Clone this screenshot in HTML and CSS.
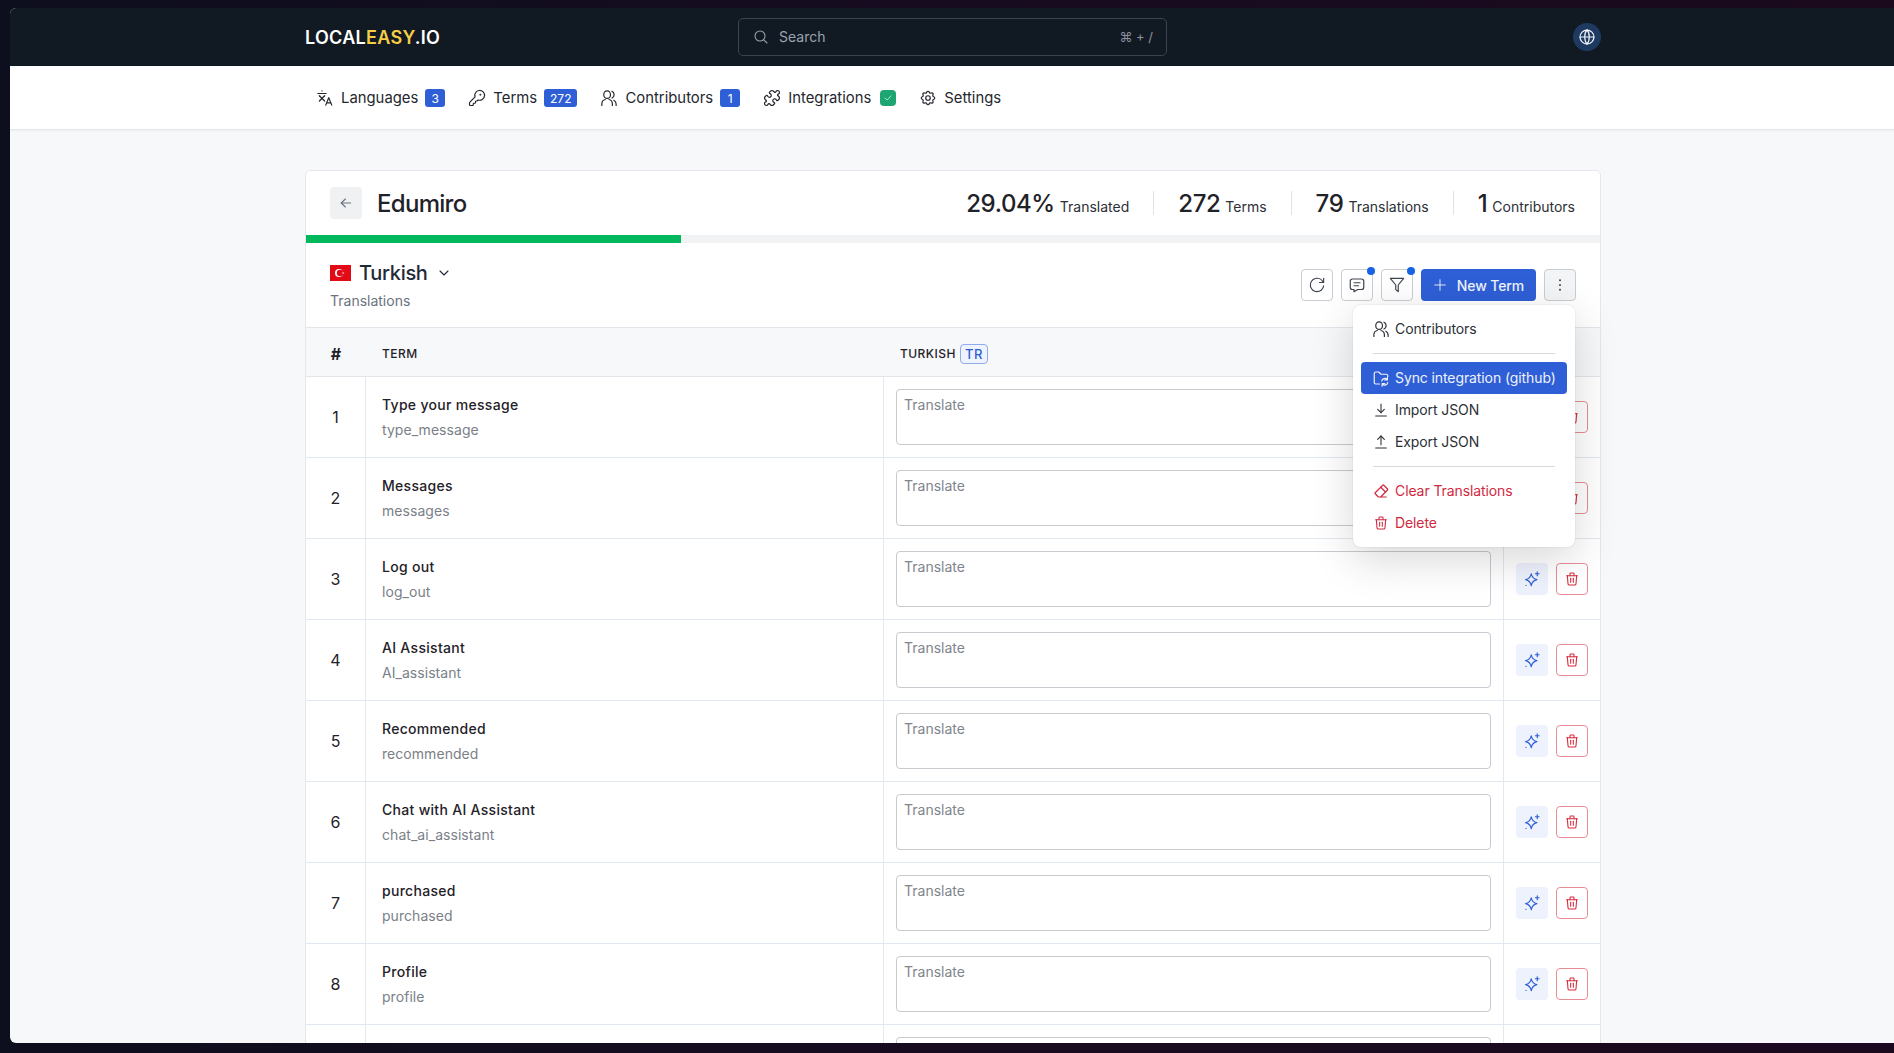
FILE: index.html
```html
<!DOCTYPE html>
<html lang="en">
<head>
<meta charset="utf-8">
<title>Localeasy.io</title>
<link rel="stylesheet" href="styles.css">
</head>
<body>
<svg class="sprite" xmlns="http://www.w3.org/2000/svg">
  <symbol id="i-search" viewBox="0 0 24 24"><circle cx="10.5" cy="10.5" r="7.5"/><path d="M21 21l-5.2-5.2"/></symbol>
  <symbol id="i-globe" viewBox="0 0 24 24"><circle cx="12" cy="12" r="9.300"/><path d="M2.700 12h18.600"/><path d="M12 2.700c-2.500 2.400-3 6-3 9.300s.5 6.900 3 9.300"/><path d="M12 2.700c2.500 2.400 3 6 3 9.300s-.5 6.900-3 9.300"/></symbol>
  <symbol id="i-lang" viewBox="0 0 24 24"><path d="M8 2.500h.01"/><path d="M2.500 6h11"/><path d="M4.500 9l7 7"/><path d="M11.500 9l-7 7"/><path d="M13 21.500l4-10 4 10"/><path d="M14.500 18.500h5"/></symbol>
  <symbol id="i-key" viewBox="0 0 24 24"><path d="M2.586 17.414A2 2 0 0 0 2 18.828V21a1 1 0 0 0 1 1h3a1 1 0 0 0 1-1v-1a1 1 0 0 1 1-1h1a1 1 0 0 0 1-1v-1a1 1 0 0 1 1-1h.172a2 2 0 0 0 1.414-.586l.814-.814a6.500 6.500 0 1 0-4-4z"/><circle cx="16.500" cy="7.500" r=".5"/></symbol>
  <symbol id="i-users" viewBox="0 0 24 24"><ellipse cx="9.500" cy="7.500" rx="4.500" ry="5"/><path d="M2.500 22v-2a6 6 0 0 1 4.500-6"/><path d="M16.500 22v-2a6 6 0 0 0-4.500-6"/><path d="M16 3a5 5 0 0 1 0 9"/><path d="M21.500 22v-2a6 6 0 0 0-3-5"/></symbol>
  <symbol id="i-puzzle" viewBox="0 0 24 24"><path d="M19.439 7.850c-.049.322.059.648.289.878l1.568 1.568c.47.47.706 1.087.706 1.704s-.235 1.233-.706 1.704l-1.611 1.611a.98.98 0 0 1-.837.276c-.47-.07-.802-.48-.968-.925a2.501 2.501 0 1 0-3.214 3.214c.446.166.855.497.925.968a.979.979 0 0 1-.276.837l-1.610 1.610a2.404 2.404 0 0 1-1.705.707 2.402 2.402 0 0 1-1.704-.706l-1.568-1.568a1.026 1.026 0 0 0-.877-.29c-.493.074-.84.504-1.020.968a2.500 2.500 0 1 1-3.237-3.237c.464-.18.894-.527.967-1.020a1.026 1.026 0 0 0-.289-.877l-1.568-1.568A2.402 2.402 0 0 1 1.998 12c0-.617.236-1.234.706-1.704L4.230 8.770c.24-.24.581-.353.917-.303.515.077.877.528 1.073 1.010a2.500 2.500 0 1 0 3.259-3.259c-.482-.196-.933-.558-1.010-1.073-.05-.336.062-.676.303-.917l1.525-1.525A2.402 2.402 0 0 1 12 1.998c.617 0 1.234.236 1.704.706l1.568 1.568c.23.23.556.338.877.29.493-.074.84-.504 1.020-.968a2.500 2.500 0 1 1 3.237 3.237c-.464.18-.894.527-.967 1.020Z"/></symbol>
  <symbol id="i-gear" viewBox="0 0 24 24"><path d="M10.325 4.317c.426-1.756 2.924-1.756 3.350 0a1.724 1.724 0 0 0 2.573 1.066c1.543-.94 3.310.826 2.370 2.370a1.724 1.724 0 0 0 1.065 2.572c1.756.426 1.756 2.924 0 3.350a1.724 1.724 0 0 0-1.066 2.573c.94 1.543-.826 3.310-2.370 2.370a1.724 1.724 0 0 0-2.572 1.065c-.426 1.756-2.924 1.756-3.350 0a1.724 1.724 0 0 0-2.573-1.066c-1.543.94-3.310-.826-2.370-2.370a1.724 1.724 0 0 0-1.065-2.572c-1.756-.426-1.756-2.924 0-3.350a1.724 1.724 0 0 0 1.066-2.573c-.94-1.543.826-3.310 2.370-2.370 1 .608 2.296.07 2.572-1.065z"/><circle cx="12" cy="12" r="3"/></symbol>
  <symbol id="i-check" viewBox="0 0 24 24"><path d="M5 12l5 5 9-10"/></symbol>
  <symbol id="i-left" viewBox="0 0 24 24"><path d="M5 12h14"/><path d="M5 12l6 6"/><path d="M5 12l6-6"/></symbol>
  <symbol id="i-chev" viewBox="0 0 24 24"><path d="M6 9l6 6 6-6"/></symbol>
  <symbol id="i-refresh" viewBox="0 0 24 24"><path d="M19.933 13.041a8 8 0 1 1-9.925-8.788c3.899-1 7.935 1.007 9.425 4.747"/><path d="M20 4v5h-5"/></symbol>
  <symbol id="i-msg" viewBox="0 0 24 24"><path d="M8 9h8"/><path d="M8 13h6"/><path d="M18 4a3 3 0 0 1 3 3v8a3 3 0 0 1-3 3h-5l-5 3v-3h-2a3 3 0 0 1-3-3v-8a3 3 0 0 1 3-3h12z"/></symbol>
  <symbol id="i-filter" viewBox="0 0 24 24"><path d="M4 4h16l-6.500 8v8l-3-2.500v-5.500z"/></symbol>
  <symbol id="i-plus" viewBox="0 0 24 24"><path d="M12 3v18"/><path d="M3 12h18"/></symbol>
  <symbol id="i-dots" viewBox="0 0 24 24"><path d="M12 5h.01"/><path d="M12 12h.01"/><path d="M12 19h.01"/></symbol>
  <symbol id="i-sync" viewBox="0 0 24 24"><path d="M10 20H5a2 2 0 0 1-2-2V6a2 2 0 0 1 2-2h4l3 3h7a2 2 0 0 1 2 2v1"/><path d="M13 16a4 4 0 0 1 7-2"/><path d="M21 18a4 4 0 0 1-7 2"/><path d="M20.500 11v3.500H17"/><path d="M13.500 23v-3.500H17"/></symbol>
  <symbol id="i-down" viewBox="0 0 24 24"><path d="M12 3v13"/><path d="M7 11l5 5 5-5"/><path d="M4 21h16"/></symbol>
  <symbol id="i-up" viewBox="0 0 24 24"><path d="M12 16V3"/><path d="M7 8l5-5 5 5"/><path d="M4 21h16"/></symbol>
  <symbol id="i-eraser" viewBox="0 0 24 24"><path d="M19 20H8.500l-4.210-4.300a1 1 0 0 1 0-1.410l10-10a1 1 0 0 1 1.410 0l5 5a1 1 0 0 1 0 1.410L11.500 20"/><path d="M18 13.300L11.700 7"/></symbol>
  <symbol id="i-trash" viewBox="0 0 24 24"><path d="M4 7h16"/><path d="M10 11v6"/><path d="M14 11v6"/><path d="M5 7l1 12a2 2 0 0 0 2 2h8a2 2 0 0 0 2-2l1-12"/><path d="M9 7V4a1 1 0 0 1 1-1h4a1 1 0 0 1 1 1v3"/></symbol>
  <symbol id="i-spark" viewBox="0 0 24 24"><path d="M11 5c.8 4.500 3 6.800 7.500 7.800-4.500 1-6.700 3.200-7.500 8.200-.8-5-3-7.200-7.500-8.200C8 11.800 10.200 9.500 11 5z"/><path d="M19 2.500v5"/><path d="M16.500 5h5"/><path d="M4 20.500h.01"/></symbol>
</svg>

<div class="frame">
  <div class="app">
    <header class="topbar">
      <div class="container topbar-inner">
        <div class="logo">LOCAL<span class="logo-accent">EASY</span>.IO</div>
        <div class="search">
          <svg class="icon icon-16"><use href="#i-search"/></svg>
          <span class="search-text">Search</span>
          <span class="search-keys">⌘ + /</span>
        </div>
        <div class="topbar-end">
          <button class="globe" type="button" aria-label="Language"><svg class="icon icon-18"><use href="#i-globe"/></svg></button>
        </div>
      </div>
    </header>

    <nav class="subnav">
      <div class="container subnav-inner">
        <a class="nav-item"><svg class="icon icon-18"><use href="#i-lang"/></svg>Languages<span class="badge">3</span></a>
        <a class="nav-item"><svg class="icon icon-18"><use href="#i-key"/></svg>Terms<span class="badge">272</span></a>
        <a class="nav-item"><svg class="icon icon-18"><use href="#i-users"/></svg>Contributors<span class="badge">1</span></a>
        <a class="nav-item"><svg class="icon icon-18"><use href="#i-puzzle"/></svg>Integrations<span class="badge badge-ok"><svg class="icon icon-10"><use href="#i-check"/></svg></span></a>
        <a class="nav-item"><svg class="icon icon-18"><use href="#i-gear"/></svg>Settings</a>
      </div>
    </nav>

    <main class="container content">
      <section class="card">
        <div class="card-head">
          <button class="back" type="button" aria-label="Back"><svg class="icon icon-16"><use href="#i-left"/></svg></button>
          <h1 class="project">Edumiro</h1>
          <div class="stats">
            <div class="stat"><strong>29.04%</strong> <span>Translated</span></div>
            <div class="stat"><strong>272</strong> <span>Terms</span></div>
            <div class="stat"><strong>79</strong> <span>Translations</span></div>
            <div class="stat"><strong>1</strong> <span>Contributors</span></div>
          </div>
        </div>
        <div class="progress"><div class="progress-fill" style="width:29%"></div></div>

        <div class="section">
          <div>
            <div class="lang">
              <svg class="flag" viewBox="0 0 21 16"><rect width="21" height="16" fill="#e30a17"/><circle cx="9" cy="8" r="4" fill="#fff"/><circle cx="10" cy="8" r="3.200" fill="#e30a17"/><path d="M11.500 8l3-1.100-1.200 1.100 1.200 1.100z" fill="#fff"/></svg>
              <span class="lang-name">Turkish</span>
              <svg class="icon icon-16 lang-chev"><use href="#i-chev"/></svg>
            </div>
            <div class="lang-sub">Translations</div>
          </div>
          <div class="toolbar">
            <button class="tool" type="button" aria-label="Refresh"><svg class="icon icon-20"><use href="#i-refresh"/></svg></button>
            <button class="tool" type="button" aria-label="Comments"><svg class="icon icon-18"><use href="#i-msg"/></svg><span class="dot"></span></button>
            <button class="tool" type="button" aria-label="Filter"><svg class="icon icon-20"><use href="#i-filter"/></svg><span class="dot"></span></button>
            <button class="primary" type="button"><svg class="icon icon-14"><use href="#i-plus"/></svg>New Term</button>
            <button class="tool tool-open" type="button" aria-label="More"><svg class="icon icon-16 icon-bold"><use href="#i-dots"/></svg></button>
            <div class="menu">
              <a class="menu-item"><svg class="icon icon-18 menu-wide"><use href="#i-users"/></svg>Contributors</a>
              <hr class="menu-sep">
              <a class="menu-item menu-active"><svg class="icon icon-18 menu-wide"><use href="#i-sync"/></svg>Sync integration (github)</a>
              <a class="menu-item"><svg class="icon icon-16"><use href="#i-down"/></svg>Import JSON</a>
              <a class="menu-item"><svg class="icon icon-16"><use href="#i-up"/></svg>Export JSON</a>
              <hr class="menu-sep">
              <a class="menu-item menu-danger"><svg class="icon icon-18 menu-wide"><use href="#i-eraser"/></svg>Clear Translations</a>
              <a class="menu-item menu-danger"><svg class="icon icon-16"><use href="#i-trash"/></svg>Delete</a>
            </div>
          </div>
        </div>

        <div class="thead">
          <div class="th-num">#</div>
          <div class="th">TERM</div>
          <div class="th">TURKISH <span class="code">TR</span></div>
          <div></div>
        </div>

        <div class="row">
          <div class="num">1</div>
          <div class="term"><div class="term-name">Type your message</div><div class="term-key">type_message</div></div>
          <div class="field"><textarea placeholder="Translate"></textarea></div>
          <div class="actions"><button class="ai" type="button" aria-label="AI"><svg class="icon icon-18"><use href="#i-spark"/></svg></button><button class="del" type="button" aria-label="Delete"><svg class="icon icon-16"><use href="#i-trash"/></svg></button></div>
        </div>
        <div class="row">
          <div class="num">2</div>
          <div class="term"><div class="term-name">Messages</div><div class="term-key">messages</div></div>
          <div class="field"><textarea placeholder="Translate"></textarea></div>
          <div class="actions"><button class="ai" type="button" aria-label="AI"><svg class="icon icon-18"><use href="#i-spark"/></svg></button><button class="del" type="button" aria-label="Delete"><svg class="icon icon-16"><use href="#i-trash"/></svg></button></div>
        </div>
        <div class="row">
          <div class="num">3</div>
          <div class="term"><div class="term-name">Log out</div><div class="term-key">log_out</div></div>
          <div class="field"><textarea placeholder="Translate"></textarea></div>
          <div class="actions"><button class="ai" type="button" aria-label="AI"><svg class="icon icon-18"><use href="#i-spark"/></svg></button><button class="del" type="button" aria-label="Delete"><svg class="icon icon-16"><use href="#i-trash"/></svg></button></div>
        </div>
        <div class="row">
          <div class="num">4</div>
          <div class="term"><div class="term-name">AI Assistant</div><div class="term-key">AI_assistant</div></div>
          <div class="field"><textarea placeholder="Translate"></textarea></div>
          <div class="actions"><button class="ai" type="button" aria-label="AI"><svg class="icon icon-18"><use href="#i-spark"/></svg></button><button class="del" type="button" aria-label="Delete"><svg class="icon icon-16"><use href="#i-trash"/></svg></button></div>
        </div>
        <div class="row">
          <div class="num">5</div>
          <div class="term"><div class="term-name">Recommended</div><div class="term-key">recommended</div></div>
          <div class="field"><textarea placeholder="Translate"></textarea></div>
          <div class="actions"><button class="ai" type="button" aria-label="AI"><svg class="icon icon-18"><use href="#i-spark"/></svg></button><button class="del" type="button" aria-label="Delete"><svg class="icon icon-16"><use href="#i-trash"/></svg></button></div>
        </div>
        <div class="row">
          <div class="num">6</div>
          <div class="term"><div class="term-name">Chat with AI Assistant</div><div class="term-key">chat_ai_assistant</div></div>
          <div class="field"><textarea placeholder="Translate"></textarea></div>
          <div class="actions"><button class="ai" type="button" aria-label="AI"><svg class="icon icon-18"><use href="#i-spark"/></svg></button><button class="del" type="button" aria-label="Delete"><svg class="icon icon-16"><use href="#i-trash"/></svg></button></div>
        </div>
        <div class="row">
          <div class="num">7</div>
          <div class="term"><div class="term-name">purchased</div><div class="term-key">purchased</div></div>
          <div class="field"><textarea placeholder="Translate"></textarea></div>
          <div class="actions"><button class="ai" type="button" aria-label="AI"><svg class="icon icon-18"><use href="#i-spark"/></svg></button><button class="del" type="button" aria-label="Delete"><svg class="icon icon-16"><use href="#i-trash"/></svg></button></div>
        </div>
        <div class="row">
          <div class="num">8</div>
          <div class="term"><div class="term-name">Profile</div><div class="term-key">profile</div></div>
          <div class="field"><textarea placeholder="Translate"></textarea></div>
          <div class="actions"><button class="ai" type="button" aria-label="AI"><svg class="icon icon-18"><use href="#i-spark"/></svg></button><button class="del" type="button" aria-label="Delete"><svg class="icon icon-16"><use href="#i-trash"/></svg></button></div>
        </div>
        <div class="row">
          <div class="num"></div>
          <div class="term"></div>
          <div class="field"><textarea></textarea></div>
          <div class="actions"></div>
        </div>
      </section>
    </main>
  </div>
</div>
</body>
</html>
```

FILE: styles.css
```css
* { box-sizing: border-box; }
html, body { height: 100%; margin: 0; overflow: hidden; }
body { font-family: Inter, "Noto Sans", sans-serif; font-size: 14px; color: #1f2228; background: #0f0d1f; }
button { font: inherit; cursor: pointer; padding: 0; }
.sprite { display: none; }

.icon { fill: none; stroke: currentColor; stroke-width: 1.6; stroke-linecap: round; stroke-linejoin: round; flex: none; display: block; }
.icon-10 { width: 10px; height: 10px; }
.icon-14 { width: 14px; height: 14px; }
.icon-16 { width: 16px; height: 16px; }
.icon-18 { width: 18px; height: 18px; }
.icon-20 { width: 20px; height: 20px; stroke-width: 1.4; }
.icon-bold { stroke-width: 3; }

.frame { height: 100%; padding: 8px 0 10px 10px; background: linear-gradient(90deg, #0d0e1e 0%, #170b20 50%, #1b0a1e 100%); overflow: hidden; display: flex; }
.app { flex: none; width: 1886px; height: 100%; background: #f7f8fa; border-radius: 6px 0 0 6px; overflow: hidden; display: flex; flex-direction: column; }
.container { width: 1296px; margin: 0 auto; }

.topbar { flex: none; height: 58px; background: #111923; }
.topbar-inner { height: 100%; display: grid; grid-template-columns: 433px 429px 1fr; align-items: center; }
.logo { font-size: 18px; font-weight: 600; color: #fff; letter-spacing: .3px; padding-top: 1px; }
.logo-accent { color: #f6ce46; }
.search { height: 38px; margin-top: -1px; display: flex; align-items: center; padding: 0 13px 0 14px; border: 1px solid #3d444e; border-radius: 5px; color: #9ca3af; }
.search-text { margin-left: 10px; }
.search-keys { margin-left: auto; font-size: 13px; color: #8b929c; }
.topbar-end { display: flex; justify-content: flex-end; }
.globe { width: 28px; height: 28px; margin-top: -1px; border: 0; border-radius: 50%; background: #1f3a61; color: #f1f5fb; display: flex; align-items: center; justify-content: center; }

.subnav { flex: none; height: 64px; background: #fff; border-bottom: 1px solid #e5e7eb; box-shadow: 0 1px 2px rgba(0,0,0,.04); }
.subnav-inner { height: 100%; padding-top: 1px; display: flex; align-items: center; }
.nav-item { display: flex; align-items: center; gap: 7px; padding: 0 12px 0 11px; font-size: 14.85px; color: #24272d; }
.badge { min-width: 20px; height: 18px; padding: 0 6px; border-radius: 3px; background: #2f5fd6; color: #fff; font-size: 12px; display: flex; align-items: center; justify-content: center; }
.badge-ok { margin-left: 2px; min-width: 16px; width: 16px; height: 16px; padding: 0; border-radius: 4px; background: #1ea672; }

.content { flex: 1; padding-top: 40px; }
.card { background: #fff; border: 1px solid #e5e7eb; border-radius: 5px 5px 0 0; }
.card-head { height: 64px; display: flex; align-items: center; padding: 0 24px; }
.back { width: 32px; height: 32px; border: 0; border-radius: 4px; background: #f0f1f3; color: #6b7280; display: flex; align-items: center; justify-content: center; }
.project { margin: 0 0 0 15px; font-size: 24px; font-weight: 500; letter-spacing: -.7px; color: #1f2228; }
.stats { margin-left: auto; display: flex; align-items: center; }
.stat { display: flex; align-items: baseline; gap: 5px; padding: 1px 24px 0; height: 24px; border-right: 1px solid #e0e2e6; }
.stat:last-child { border-right: 0; padding-right: 1px; }
.stat strong { font-size: 24px; font-weight: 500; line-height: 24px; letter-spacing: -.4px; color: #1f2228; }
.stat span { font-size: 14px; color: #2c2f36; }

.progress { height: 8px; background: #f1f2f4; }
.progress-fill { height: 100%; background: #03b85c; }

.section { height: 84px; display: flex; justify-content: space-between; padding: 16px 24px; }
.lang { display: flex; align-items: center; height: 28px; }
.flag { width: 21px; height: 16px; display: block; }
.lang-name { margin-left: 8px; font-size: 20px; font-weight: 500; letter-spacing: -.3px; color: #1f2937; }
.lang-chev { margin-left: 8px; color: #1f2937; }
.lang-sub { margin-top: 4px; line-height: 20px; color: #6b7280; }

.toolbar { position: relative; display: flex; align-items: flex-start; gap: 8px; padding-top: 10px; }
.tool { position: relative; width: 32px; height: 32px; border: 1px solid #c9ccd2; border-radius: 4px; background: #fff; color: #3f4550; display: flex; align-items: center; justify-content: center; }
.tool-open { background: #f3f4f6; }
.dot { position: absolute; top: -3px; right: -3px; width: 8px; height: 8px; border-radius: 50%; background: #1664e5; }
.primary { width: 115px; height: 32px; border: 0; border-radius: 4px; background: #2f5fd6; color: #eef2fc; font-weight: 500; letter-spacing: -.1px; display: flex; align-items: center; justify-content: center; gap: 10px; }

.menu { position: absolute; top: 46px; right: 1px; width: 222px; padding: 8px; background: #fff; border-radius: 8px; box-shadow: 0 0 2px rgba(0,0,0,.12), 0 12px 44px rgba(0,0,0,.16); z-index: 5; }
.menu-item { height: 32px; padding: 0 12px 1px; display: flex; align-items: center; gap: 6px; border-radius: 4px; letter-spacing: -.1px; color: #2c2f36; white-space: nowrap; }
.menu-item .icon { margin-top: 1px; }
.menu-item .menu-wide { margin-left: -1px; margin-right: -1px; }
.menu-active { background: #2f5fd6; color: #eef2fc; }
.menu-danger { color: #d0293f; }
.menu-sep { height: 1px; margin: 8px 12px; border: 0; background: #d8dae0; }

.thead { height: 50px; padding-top: 3px; display: grid; grid-template-columns: 60px 518px 620px 1fr; align-items: center; background: #f7f8fa; border-top: 1px solid #e2e5ea; border-bottom: 1px solid #e2e5ea; }
.th-num { text-align: center; font-size: 16px; font-weight: 700; color: #1f2228; }
.th { padding-left: 16px; font-size: 12px; font-weight: 500; letter-spacing: .45px; color: #1f2228; display: flex; align-items: center; gap: 4px; }
.code { width: 28px; height: 20px; border: 1px solid #8fabec; border-radius: 4px; background: #eef3fd; color: #2f5fd6; font-size: 13px; font-weight: 500; display: flex; align-items: center; justify-content: center; }

.row { height: 81px; display: grid; grid-template-columns: 60px 518px 620px 1fr; border-bottom: 1px solid #e2e8ef; }
.num { display: flex; align-items: center; justify-content: center; font-size: 16px; border-right: 1px solid #e2e8ef; }
.term { display: flex; flex-direction: column; justify-content: center; gap: 5px; padding-left: 16px; border-right: 1px solid #e2e8ef; }
.term-name { line-height: 20px; font-weight: 450; font-size: 14px; letter-spacing: .3px; color: #1f2228; }
.term-key { line-height: 20px; letter-spacing: .05px; color: #7a7f88; }
.field { padding: 12px; border-right: 1px solid #e2e8ef; }
.field textarea { display: block; width: 100%; height: 56px; padding: 5px 7px; resize: none; border: 1px solid #c8cacf; border-radius: 4px; font: 14px/20px Inter, sans-serif; outline: none; }
.field textarea::placeholder { color: #80858d; opacity: 1; }
.actions { display: flex; align-items: center; gap: 8px; padding: 0 12px 1px; }
.ai { width: 32px; height: 32px; border: 0; border-radius: 4px; background: #eef2fc; color: #2f5fd6; display: flex; align-items: center; justify-content: center; }
.del { width: 32px; height: 32px; border: 1px solid #e98d96; border-radius: 4px; background: #fff; color: #d92a3c; display: flex; align-items: center; justify-content: center; }
```
